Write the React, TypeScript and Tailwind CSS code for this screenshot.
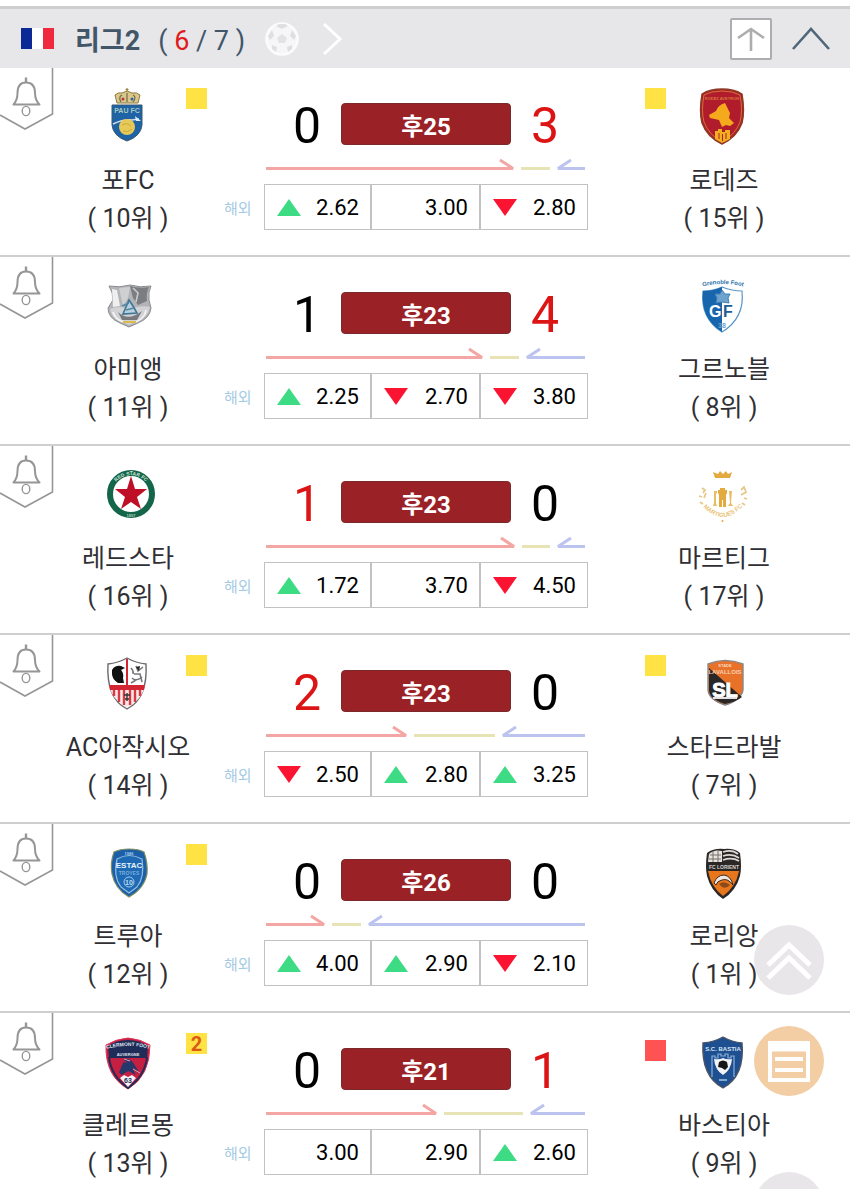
import React from 'react';

type Trend = 'up' | 'down' | 'none';
type Card = 'yellow' | 'yellow2' | 'red';

interface Odd {
  value: string;
  trend: Trend;
}

interface Team {
  name: string;
  rank: number;
  score: number;
  leading?: boolean;
  card?: Card;
  logo: React.ReactNode;
}

interface Match {
  id: number;
  time: string;
  home: Team;
  away: Team;
  // end of the home bar and end of the draw bar
  flow: [number, number];
  odds: Odd[];
}

const PauLogo = () => (
  <g>
    <path d="M17 16 L15 8 Q18 5 22 6 L27 4 L32 6 Q37 5 40 8 L38 16 Z" fill="#d9c88a" stroke="#8d7a3c" strokeWidth="1" />
    <path d="M27 1 V5 M25.5 2.5 H28.5" stroke="#9c8440" strokeWidth="1.2" />
    <path d="M21 15 Q18 10 22 8 M27 15 V6 M33 15 Q37 10 33 8" stroke="#6f6a4a" strokeWidth="1.2" fill="none" />
    <circle cx="23" cy="12" r="1.5" fill="#b7373a" />
    <circle cx="32" cy="12" r="1.5" fill="#2f62a5" />
    <path d="M12 18 H42 V38 Q41 49 27 54 Q13 49 12 38 Z" fill="#1d63a6" stroke="#3c5a6e" strokeWidth="1" />
    <text x="27" y="26" textAnchor="middle" fontSize="7" fontWeight="700" fill="#a9c9bd">PAU FC</text>
    <path d="M13 37 Q24 32 32 33 L39 32" stroke="#cfe0ee" strokeWidth="1.5" fill="none" />
    <path d="M35 29 L41 34 L36 34 Z" fill="#e4eff8" />
    <circle cx="27" cy="40" r="8" fill="#e6c956" />
    <path d="M22 38 Q27 35 31 39 M23 44 Q28 46 32 42" stroke="#c9a93c" strokeWidth="1" fill="none" />
  </g>
);

const RodezLogo = () => (
  <g>
    <path d="M28 2 Q40 2 48 7 Q51 24 48 36 Q43 50 28 57 Q13 50 8 36 Q5 24 8 7 Q16 2 28 2 Z" fill="#b01c2c" stroke="#8c3b24" strokeWidth="1.4" />
    <path d="M28 4 Q39 4 46 8 Q49 24 46 35 Q41 48 28 55 Q15 48 10 35 Q7 24 10 8 Q17 4 28 4 Z" fill="none" stroke="#d98a3a" strokeWidth="0.8" />
    <text x="28" y="13" textAnchor="middle" fontSize="4" fontWeight="700" fill="#d8753a">RODEZ AVEYRON</text>
    <path d="M15 28 L22 24 Q24 18 31 16 L33 20 L36 26 L35 31 L40 36 L36 39 L32 38 L28 40 L25 33 L16 31 Z" fill="#f5a91d" />
    <path d="M21 44 H24 V42 H28 V45 H31 V43 H36 V52 L28 56 L21 52 Z" fill="#f2b01f" />
    <path d="M25 46 V52 M28.5 47 V54 M32 46 V52" stroke="#b01c2c" strokeWidth="1" />
  </g>
);

const AmiensLogo = () => (
  <g>
    <path d="M9 10 Q20 12 30 9 Q40 12 51 10 Q48 16 49 24 L51 32 Q50 42 38 47 L29 51 L20 47 Q8 42 8 32 L13 24 Q13 16 9 10 Z" fill="#b3b4b7" stroke="#8b8c90" strokeWidth="1" />
    <path d="M30 10 Q40 13 49 11 Q46 17 47 25 L38 29 L33 22 Z" fill="#7c7d81" />
    <path d="M12 13 L17 14 L20 30 L13 31 Z" fill="#efeff0" />
    <path d="M19 12 L23 30 L28 22 L30 11 Z" fill="#cfd0d2" />
    <path d="M33 12 L38 17 L36 26" stroke="#c9cacc" strokeWidth="1.6" fill="none" />
    <path d="M10 33 Q20 29 30 33 Q40 29 50 31 Q48 41 38 45 L29 49 L20 45 Q11 41 10 33 Z" fill="#d3d3d6" />
    <path d="M18 36 Q28 46 42 35 L37 44 H22 Z" fill="#77797d" />
    <path d="M23 38 L29 24 L33 30 L37 37 Z" fill="#b9d0de" stroke="#3f7595" strokeWidth="1.6" />
    <path d="M22 30 L29 27 M26 34 L34 32" stroke="#4f88a8" strokeWidth="1.4" />
    <path d="M13 36 Q15 44 24 46 M46 34 Q45 42 36 46" stroke="#f4f4f5" strokeWidth="1.8" fill="none" />
    <path d="M23 46 H36" stroke="#d9bc4c" strokeWidth="2" />
  </g>
);

const RedStarLogo = () => (
  <g>
    <circle cx="31" cy="29" r="21" fill="#fff" stroke="#13664a" strokeWidth="6" />
    <path d="M31 11 L35 24 L47 24 L37 32 L41 44 L31 37 L21 44 L25 32 L15 24 L27 24 Z" fill="#bf0f26" />
    <path id="rs-top" d="M12 24 A20 20 0 0 1 50 24" fill="none" />
    <text fontSize="5" fontWeight="700" fill="#cfe3d8"><textPath href="#rs-top" startOffset="50%" textAnchor="middle">RED STAR FC</textPath></text>
    <text x="31" y="52" textAnchor="middle" fontSize="4" fontWeight="700" fill="#a5cdb9">1897</text>
  </g>
);

const GrenobleLogo = () => (
  <g>
    <path id="gf-top" d="M7 11 Q28 5 51 11" fill="none" />
    <text fontSize="6" fontWeight="700" fill="#2d72ad"><textPath href="#gf-top" startOffset="50%" textAnchor="middle">Grenoble Foot</textPath></text>
    <path d="M9 15 Q19 15 28 11 Q38 15 48 15 Q51 42 28 56 Q6 42 9 15 Z" fill="#fff" stroke="#5b96c4" strokeWidth="1.2" />
    <path d="M9 15 Q19 15 28 11 V56 Q6 42 9 15 Z" fill="#1765ac" />
    <path d="M28 14 L31 18 L36 18 L34 22 L35 27 L28 26 L22 27 L23 22 L21 18 L26 18 Z" fill="#6ea3ce" stroke="#3f80b7" strokeWidth="1" />
    <text x="15" y="41" fontSize="16" fontWeight="700" fill="#fff">G</text>
    <text x="29" y="41" fontSize="16" fontWeight="700" fill="#1f5c96">F</text>
    <text x="28" y="52" textAnchor="middle" fontSize="7" fontWeight="700" fill="#6aa4d2">38</text>
  </g>
);

const MartiguesLogo = () => (
  <g fill="#e3ab3f">
    <path d="M21 13 L19 7 L24 9 L26 6 L29 9 L32 6 L34 9 L38 7 L36 13 Z" />
    <path d="M26 23 H31 V25 H33 V28 L32 30 V42 H29 V35 H28 V42 H25 V30 L24 28 V25 H26 Z" />
    <path d="M20 26 H23 V28 L22 29 V38 L23 41 H19 L20 38 Z M35 26 H38 L37 38 L39 41 H34 L36 38 Z" opacity="0.8" />
    <path d="M8 23 L11 25 L9 28 M5 31 L8 32 M6 37 L9 39 M12 28 L10 33 M47 25 L50 22 L52 27 L47 30 M50 33 L53 34 M48 38 L51 40" fill="none" stroke="#e8c88a" strokeWidth="1.8" />
    <path id="mt-arc" d="M8 40 Q28 64 50 40" fill="none" />
    <text fontSize="6" fontWeight="700" opacity="0.75"><textPath href="#mt-arc" startOffset="50%" textAnchor="middle">MARTIGUES FC</textPath></text>
    <circle cx="28.5" cy="56" r="1" />
  </g>
);

const AjaccioLogo = () => (
  <g>
    <path d="M27 4 Q36 9 46 10 Q48 44 27 55 Q6 44 8 10 Q18 9 27 4 Z" fill="#fff" stroke="#6b6b70" strokeWidth="1.4" />
    <path d="M9 31 H45 Q42 46 27 54 Q12 46 9 31 Z" fill="#fbe9ea" />
    <path d="M9 31 H45 L44 36 H10 Z" fill="#d42632" />
    <path d="M14 36 V42 M19 36 V48 M24 36 V51 M30 36 V51 M35 36 V48 M40 36 V42" stroke="#d83a44" strokeWidth="2.4" />
    <path d="M27 5 V34" stroke="#d42632" strokeWidth="2" />
    <path d="M12 16 Q15 11 21 12 L25 14 L21 16 Q24 19 23 24 L24 29 H18 Q12 25 12 20 Z" fill="#111" />
    <path d="M31 14 Q34 17 33 20 M36 12 L38 17 L43 13 M32 24 Q36 28 42 23 M34 20 H40 L42 28 M31 29 L36 26" stroke="#77787c" strokeWidth="1.6" fill="none" />
    <path d="M36 13 L40 12 L39 17 Z" fill="#222" />
    <path d="M27 39 V47 M24 41 H30 M25 45 H29" stroke="#333" strokeWidth="1.4" />
  </g>
);

const LavalLogo = () => (
  <g>
    <path d="M14 10 Q31 3 49 10 V36 Q47 46 31 51 Q15 46 14 36 Z" fill="#e8722a" stroke="#8d8784" strokeWidth="1.4" />
    <path d="M15 14 L48 43 Q42 48 31 50 Q15 45 15 36 Z" fill="#2a2827" />
    <text x="31" y="13" textAnchor="middle" fontSize="4" fontWeight="700" fill="#f9d9c2">STADE</text>
    <text x="31" y="20" textAnchor="middle" fontSize="6" fontWeight="700" fill="#f7cfb4">LAVALLOIS</text>
    <text x="31" y="43" textAnchor="middle" fontSize="20" fontWeight="700" fill="#fff" stroke="#fff" strokeWidth="1">SL</text>
    <path d="M19 44 H43" stroke="#e6e4e3" strokeWidth="2" />
  </g>
);

const TroyesLogo = () => (
  <g>
    <path d="M29 6 Q39 6 44 9 Q48 20 47 31 Q44 46 29 54 Q15 46 12 31 Q10 20 14 9 Q20 6 29 6 Z" fill="#1b5fa8" stroke="#7d8f62" strokeWidth="1.2" />
    <path d="M17 16 Q29 9 42 16 Q45 34 37 44 L29 50 L21 44 Q13 34 17 16 Z" fill="#1e6ab5" stroke="#8fbce0" strokeWidth="1.2" />
    <text x="29" y="12" textAnchor="middle" fontSize="4" fontWeight="700" fill="#a9cdea">1986</text>
    <text x="29" y="25" textAnchor="middle" fontSize="8" fontWeight="700" fill="#e9f3fb">ESTAC</text>
    <text x="29" y="32" textAnchor="middle" fontSize="5" fontWeight="700" fill="#76acdb">TROYES</text>
    <circle cx="29" cy="39" r="5" fill="none" stroke="#a6cbe8" strokeWidth="1" />
    <text x="29" y="42" textAnchor="middle" fontSize="7" fontWeight="700" fill="#bcd9ef">10</text>
  </g>
);

const LorientLogo = () => (
  <g>
    <path d="M30 6 Q40 5 46 10 Q48 24 46 33 Q42 48 29 56 Q17 48 13 33 Q11 24 13 10 Q20 5 30 6 Z" fill="#2b2726" />
    <path d="M15 11 Q20 6 28 8 V19 H14 Z" fill="#e8e2df" />
    <path d="M16 12 H27 M15 16 H27 M19 8 V19 M24 8 V19" stroke="#77706d" strokeWidth="1" />
    <path d="M29 9 Q38 6 44 11 M29 13 Q38 10 45 15 M29 17 Q38 14 45 18" stroke="#ddd8d6" strokeWidth="1.8" fill="none" />
    <text x="30" y="26" textAnchor="middle" fontSize="5" fontWeight="700" fill="#d5d0ce">FC LORIENT</text>
    <path d="M14 28 H45 Q42 44 29 53 Q17 44 14 28 Z" fill="#e8761c" />
    <path d="M20 40 Q23 32 30 32 Q37 33 39 42 Q34 35 28 37 Q23 38 22 42 Z" fill="#f0e6df" stroke="#3a2a20" strokeWidth="1" />
    <path d="M25 41 Q30 37 36 42 Q32 46 28 44 Z" fill="#8c4a1b" />
  </g>
);

const ClermontLogo = () => (
  <g>
    <path d="M28 6 Q40 7 50 13 Q50 44 28 57 Q5 44 6 13 Q16 7 28 6 Z" fill="#c51f42" stroke="#d9365a" strokeWidth="1" />
    <path d="M28 8 Q39 8 48 14 L47 26 H9 L8 14 Q17 8 28 8 Z" fill="#1f2c57" />
    <path d="M9 25 Q11 44 28 56 Q45 44 47 25" fill="none" stroke="#1f2c57" strokeWidth="2" />
    <path id="cf-top" d="M6 17 Q28 11 50 17" fill="none" />
    <text fontSize="5" fontWeight="700" fill="#dfe3ef"><textPath href="#cf-top" startOffset="50%" textAnchor="middle">CLERMONT FOOT</textPath></text>
    <text x="28" y="24" textAnchor="middle" fontSize="4" fontWeight="700" fill="#dfe3ef">AUVERGNE</text>
    <path d="M24 28 Q29 26 33 32 L38 40 M20 40 L24 31 L31 33 L34 41 L28 38 L22 42 Z" fill="#26386b" stroke="#26386b" strokeWidth="1.6" />
    <path d="M24 27 L30 29 M33 37 L40 41" stroke="#e8a0b0" strokeWidth="1" />
    <path d="M20 46 L24 43 L28 45 L32 43 L36 46 L28 55 Z" fill="#f1f3f8" />
    <text x="28" y="51" textAnchor="middle" fontSize="7" fontWeight="700" fill="#1f2c57">63</text>
  </g>
);

const BastiaLogo = () => (
  <g>
    <path d="M29 5 Q38 10 48 11 Q51 44 29 56 Q7 44 9 11 Q20 10 29 5 Z" fill="#1d4f91" stroke="#4b5566" strokeWidth="1.4" />
    <text x="29" y="19" textAnchor="middle" fontSize="6" fontWeight="700" fill="#dbe6f3">S.C. BASTIA</text>
    <path d="M18 45 V24 H21 V26 H24 V22 H27 V24 H31 V22 H34 V26 H37 V24 H40 V45" fill="none" stroke="#8bb0da" strokeWidth="1.2" />
    <path d="M29 26 Q33 28 38 27 Q37 38 29 43 Q21 38 20 27 Q25 28 29 26 Z" fill="#f3f4f6" />
    <path d="M25 30 Q29 27 33 30 L34 35 L31 38 L28 36 L24 35 Z" fill="#15171b" />
    <path d="M25 48 H33" stroke="#a9c3e2" strokeWidth="1.5" />
  </g>
);

const matches: Match[] = [
  {
    id: 1, time: '후25', flow: [249, 286],
    home: { name: '포FC', rank: 10, score: 0, card: 'yellow', logo: <PauLogo /> },
    away: { name: '로데즈', rank: 15, score: 3, leading: true, card: 'yellow', logo: <RodezLogo /> },
    odds: [{ value: '2.62', trend: 'up' }, { value: '3.00', trend: 'none' }, { value: '2.80', trend: 'down' }],
  },
  {
    id: 2, time: '후23', flow: [218, 255],
    home: { name: '아미앵', rank: 11, score: 1, logo: <AmiensLogo /> },
    away: { name: '그르노블', rank: 8, score: 4, leading: true, logo: <GrenobleLogo /> },
    odds: [{ value: '2.25', trend: 'up' }, { value: '2.70', trend: 'down' }, { value: '3.80', trend: 'down' }],
  },
  {
    id: 3, time: '후23', flow: [250, 286],
    home: { name: '레드스타', rank: 16, score: 1, leading: true, logo: <RedStarLogo /> },
    away: { name: '마르티그', rank: 17, score: 0, logo: <MartiguesLogo /> },
    odds: [{ value: '1.72', trend: 'up' }, { value: '3.70', trend: 'none' }, { value: '4.50', trend: 'down' }],
  },
  {
    id: 4, time: '후23', flow: [142, 231],
    home: { name: 'AC아작시오', rank: 14, score: 2, leading: true, card: 'yellow', logo: <AjaccioLogo /> },
    away: { name: '스타드라발', rank: 7, score: 0, card: 'yellow', logo: <LavalLogo /> },
    odds: [{ value: '2.50', trend: 'down' }, { value: '2.80', trend: 'up' }, { value: '3.25', trend: 'up' }],
  },
  {
    id: 5, time: '후26', flow: [60, 97],
    home: { name: '트루아', rank: 12, score: 0, card: 'yellow', logo: <TroyesLogo /> },
    away: { name: '로리앙', rank: 1, score: 0, logo: <LorientLogo /> },
    odds: [{ value: '4.00', trend: 'up' }, { value: '2.90', trend: 'up' }, { value: '2.10', trend: 'down' }],
  },
  {
    id: 6, time: '후21', flow: [172, 259],
    home: { name: '클레르몽', rank: 13, score: 0, card: 'yellow2', logo: <ClermontLogo /> },
    away: { name: '바스티아', rank: 9, score: 1, leading: true, card: 'red', logo: <BastiaLogo /> },
    odds: [{ value: '3.00', trend: 'none' }, { value: '2.90', trend: 'none' }, { value: '2.60', trend: 'up' }],
  },
];

const CardBadge = ({ card }: { card: Card }) => {
  if (card === 'red') {
    return <span className="mt-2 block h-[21px] w-[21px] bg-[#ff5252]" />;
  }
  return (
    <span className="mt-px flex h-[21px] w-[21px] items-center justify-center bg-[#ffe345] text-xl font-bold text-[#dd5a12]">
      {card === 'yellow2' ? '2' : ''}
    </span>
  );
};

const TeamColumn = ({ team, side }: { team: Team; side: 'home' | 'away' }) => (
  <div className={side === 'home' ? 'min-w-0 flex-1 pt-[19px] pb-[17px] pl-8' : 'min-w-0 flex-1 pt-[19px] pb-[17px] pr-[30px]'}>
    <div className="grid grid-cols-[1fr_56px_1fr]">
      <div className="flex justify-end pr-[30px]">{side === 'away' && team.card && <CardBadge card={team.card} />}</div>
      <svg
        viewBox={side === 'home' ? '0 0 56 56' : '2 0 56 56'}
        className="h-14 w-14 overflow-visible font-['Liberation_Sans']"
        aria-hidden="true"
      >
        {team.logo}
      </svg>
      <div className="flex pl-[30px]">{side === 'home' && team.card && <CardBadge card={team.card} />}</div>
    </div>
    <p className="mt-[19px] text-center text-[25px] leading-[38px] whitespace-nowrap">{team.name}</p>
    <p className="text-center text-[25px] leading-[38px] whitespace-nowrap">( {team.rank}위 )</p>
  </div>
);

const BellButton = () => (
  <button type="button" aria-label="알림" className="absolute top-0 left-0">
    <svg width="54" height="63" viewBox="0 0 54 63" fill="none" stroke="#969698">
      <path d="M52.5 0 V46 L25 61 L0 47" strokeWidth="1.6" />
      <path d="M26 9.5 V14" strokeWidth="2.4" />
      <path d="M13.5 36.5 Q17.5 32 17.5 25 Q17.5 14.5 26 14.5 Q35 14.5 35 25 Q35 32 39.5 36.5 Z" strokeWidth="2" strokeLinejoin="round" />
      <ellipse cx="26" cy="43" rx="3.8" ry="4.6" strokeWidth="1.4" />
    </svg>
  </button>
);

const FlowChart = ({ flow }: { flow: [number, number] }) => {
  const [homeEnd, drawEnd] = flow;
  const awayStart = drawEnd + 7;
  return (
    <svg viewBox="0 0 324 14" className="mt-[13px] block h-[14px] w-[324px]" fill="none" strokeWidth="3" aria-hidden="true">
      <path d={`M2 10.5 H${homeEnd} L${homeEnd - 13} 2`} stroke="#f3a6a3" strokeLinejoin="bevel" />
      <path d={`M${homeEnd + 8} 10.5 H${drawEnd}`} stroke="#e6e3b4" />
      <path d={`M321 10.5 H${awayStart + 1} L${awayStart + 14} 2`} stroke="#bcc3ee" strokeLinejoin="bevel" />
    </svg>
  );
};

const TrendIcon = ({ trend }: { trend: Trend }) => {
  if (trend === 'none') return <span />;
  return (
    <svg width="24" height="17" viewBox="0 0 24 17" aria-hidden="true">
      {trend === 'up' ? <path d="M12 0 L24 17 H0 Z" fill="#3ddc84" /> : <path d="M0 0 H24 L12 17 Z" fill="#fb1432" />}
    </svg>
  );
};

const MatchRow = ({ match }: { match: Match }) => (
  <li className="relative flex border-b-2 border-[#cfcfd2]">
    <BellButton />
    <TeamColumn team={match.home} side="home" />
    <div className="w-[404px] shrink-0 pt-[35px]">
      <div className="flex h-[42px] w-[364px] items-center pl-10 text-[50px] leading-[50px]">
        <span className={match.home.leading ? 'flex-1 pt-1 pr-5 text-right text-[#dd1414]' : 'flex-1 pt-1 pr-5 text-right text-black'}>
          {match.home.score}
        </span>
        <button type="button" className="h-[42px] w-[170px] rounded border border-[#7a2a2c] bg-[#9a2226] pt-1.5 text-2xl font-bold text-white">
          {match.time}
        </button>
        <span className={match.away.leading ? 'flex-1 pt-1 pl-5 text-[#dd1414]' : 'flex-1 pt-1 pl-5 text-black'}>
          {match.away.score}
        </span>
      </div>
      <div className="pl-10">
        <FlowChart flow={match.flow} />
      </div>
      <table className="mt-3 w-[364px] table-fixed border-separate border-spacing-0">
        <colgroup>
          <col className="w-10" />
          <col className="w-[107px]" />
          <col className="w-[109px]" />
          <col className="w-[108px]" />
        </colgroup>
        <tbody>
          <tr className="h-[46px]">
            <th scope="row" className="pt-1 text-left text-[15px] font-normal text-[#a5cbe4]">해외</th>
            {match.odds.map((odd, i) => (
              <td key={i} className="border border-[#c4c1c4] p-0">
                <div className="flex items-center justify-between pr-[11px] pl-3 text-[22px] leading-6 text-black">
                  <TrendIcon trend={odd.trend} />
                  <span className="pt-0.5">{odd.value}</span>
                </div>
              </td>
            ))}
          </tr>
        </tbody>
      </table>
    </div>
    <TeamColumn team={match.away} side="away" />
  </li>
);

const TopButton = ({ label }: { label: string }) => (
  <button type="button" aria-label={label} className="flex h-[70px] w-[70px] items-center justify-center rounded-full bg-[#e9e6ea]">
    <svg width="46" height="40" viewBox="0 0 46 40" fill="none" stroke="#fff" strokeWidth="5" aria-hidden="true">
      <path d="M2 25 L23 5 L44 25 M2 38 L23 18 L44 38" />
    </svg>
  </button>
);

const LeagueHeader = () => (
  <header className="mt-[6px] flex h-[62px] items-center border-t-[3px] border-[#cfcfcf] bg-[#e7e7e9] pl-[21px] pr-5 text-[#42566a]">
    <svg width="33" height="21" viewBox="0 0 33 21" aria-hidden="true">
      <path d="M0 0 H11 V21 H0 Z" fill="#0b2a95" />
      <path d="M11 0 H22 V21 H11 Z" fill="#fff" />
      <path d="M22 0 H33 V21 H22 Z" fill="#f0293e" />
    </svg>
    <h1 className="ml-[21px] pt-1 text-[27px] leading-10 font-bold">리그2</h1>
    <p className="ml-[18px] pt-1 text-[27px] leading-10">
      ( <span className="text-[#e01b1b]">6</span> / 7 )
    </p>
    <svg className="ml-5" width="34" height="34" viewBox="0 0 34 34" aria-hidden="true">
      <circle cx="17" cy="17" r="15.5" fill="#f6f6f8" stroke="#fbfbfc" strokeWidth="2.6" />
      <path d="M11 4 L17 7 L23 4 L20 2 H14 Z M27 8 L31 14 L29 18 L25 14 Z M7 8 L3 14 L5 18 L9 14 Z M22 25 L27 23 L27 27 L23 30 Z M12 25 L7 23 L7 27 L11 30 Z" fill="#dfdfe2" />
      <path d="M17 12 L22 16 L20 21 H14 L12 16 Z" fill="#e3e3e6" />
    </svg>
    <a href="#league" aria-label="리그 상세" className="ml-[23px]">
      <svg width="22" height="34" viewBox="0 0 22 34" fill="none" stroke="#fff" strokeWidth="3" aria-hidden="true">
        <path d="M2 2 L18 17 L2 32" />
      </svg>
    </a>
    <button type="button" aria-label="고정" className="ml-auto flex h-[42px] w-[42px] items-center justify-center rounded-xs border-2 border-[#adadaf] bg-white">
      <svg width="28" height="24" viewBox="0 0 28 24" fill="none" stroke="#adadaf" strokeWidth="2.6" aria-hidden="true">
        <path d="M14 2 V24 M1 11 L14 2 L27 11" />
      </svg>
    </button>
    <button type="button" aria-label="접기" className="ml-5">
      <svg width="38" height="24" viewBox="0 0 38 24" fill="none" stroke="#50667a" strokeWidth="2.6" aria-hidden="true">
        <path d="M1 22 L19 2 L37 22" />
      </svg>
    </button>
  </header>
);

const App: React.FC = () => (
  <main className="h-screen overflow-hidden bg-white font-[Roboto,'Noto_Sans_CJK_KR',sans-serif] text-[#303034]">
    <LeagueHeader />
    <ul>
      {matches.map((match) => (
        <MatchRow key={match.id} match={match} />
      ))}
    </ul>

    {/* floating shortcuts */}
    <nav className="fixed right-[26px] -bottom-[53px] flex flex-col">
      <TopButton label="맨 위로" />
      <button type="button" aria-label="목록" className="mt-[31px] mb-[76px] flex h-[70px] w-[70px] items-center justify-center rounded-full bg-[#f3cda3]">
        <svg width="42" height="41" viewBox="0 0 42 41" fill="none" stroke="#fff" strokeWidth="4" aria-hidden="true">
          <path d="M2 2 H40 V39 H2 Z" />
          <path d="M2 7 H40" strokeWidth="7" />
          <path d="M7 18 H35 M7 29 H35" />
        </svg>
      </button>
      <TopButton label="맨 위로" />
    </nav>
  </main>
);

export default App;
